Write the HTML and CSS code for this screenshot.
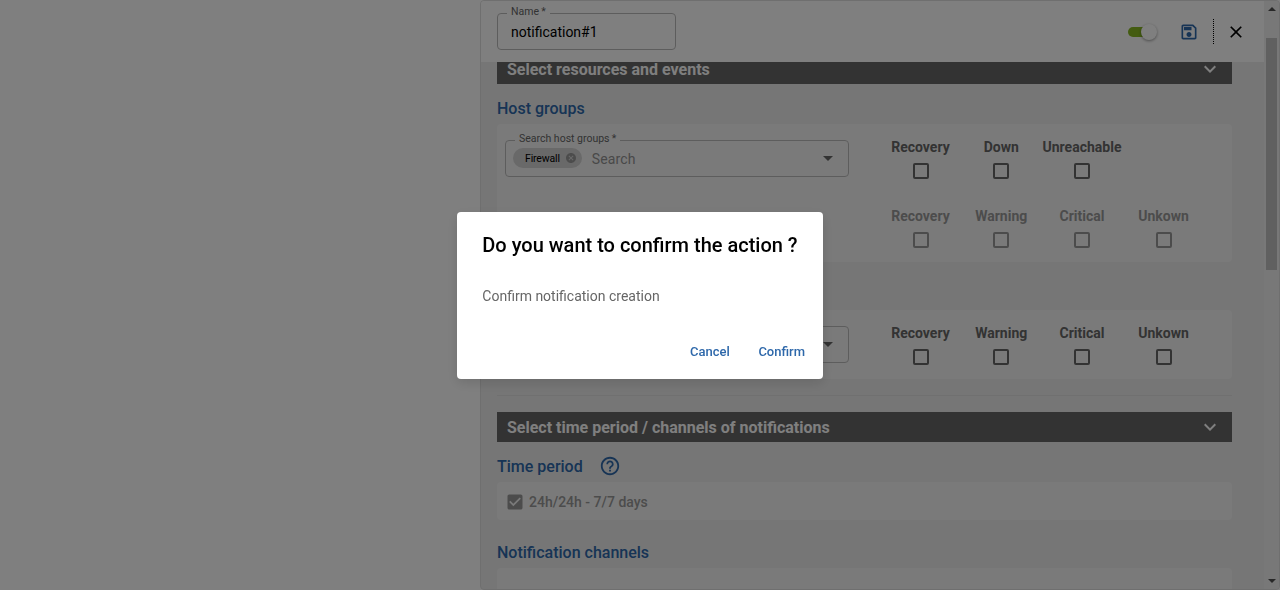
FILE: index.html
```html
<!DOCTYPE html>
<html lang="en">
<head>
<meta charset="utf-8">
<title>Notifications</title>
<link rel="stylesheet" href="styles.css">
</head>
<body>
<div class="page">
  <aside class="panel">
    <div class="main">
      <header class="header">
        <div class="field name-field"><span class="label">Name<i>&#8201;*</i></span><span class="value">notification#1</span></div>
        <div class="actions">
          <span class="switch"><span class="thumb"></span></span>
          <svg class="save" viewBox="0 0 24 24"><path fill-rule="evenodd" d="M17 3H5c-1.100 0-2 .9-2 2v14c0 1.100.9 2 2 2h14c1.100 0 2-.9 2-2V7l-4-4zm2 16H5V5h11.170L19 7.830V19zm-7-7c-1.660 0-3 1.340-3 3s1.340 3 3 3 3-1.340 3-3-1.340-3-3-3zM6 6h9v4H6z"/></svg>
          <span class="separator"></span>
          <svg class="close" viewBox="0 0 24 24"><path d="M19 6.410 17.590 5 12 10.590 6.410 5 5 6.410 10.590 12 5 17.590 6.410 19 12 13.410 17.590 19 19 17.590 13.410 12z"/></svg>
        </div>
      </header>
      <div class="scroll">
        <div class="content">
          <div class="bar"><span>Select resources and events</span><svg class="chevron" viewBox="0 0 24 24"><path d="M7.410 8.590 12 13.170l4.590-4.580L18 10l-6 6-6-6z"/></svg></div>
          <h3 class="title">Host groups</h3>
          <section class="card hosts">
            <div class="row">
              <div class="field search"><span class="label">Search host groups<i>&#8201;*</i></span><span class="chip">Firewall<svg viewBox="0 0 24 24"><path d="M12 2C6.470 2 2 6.470 2 12s4.470 10 10 10 10-4.470 10-10S17.530 2 12 2zm5 13.590L15.590 17 12 13.410 8.410 17 7 15.590 10.590 12 7 8.410 8.410 7 12 10.590 15.590 7 17 8.410 13.410 12 17 15.590z"/></svg></span><span class="hint">Search</span><svg class="arrow" viewBox="0 0 24 24"><path d="m7 10 5 5 5-5z"/></svg></div>
              <div class="checks">
                <div class="check">Recovery<span class="box"></span></div>
                <div class="check">Down<span class="box"></span></div>
                <div class="check">Unreachable<span class="box"></span></div>
              </div>
            </div>
            <div class="row second">
              <div class="checks disabled">
                <div class="check">Recovery<span class="box"></span></div>
                <div class="check">Warning<span class="box"></span></div>
                <div class="check">Critical<span class="box"></span></div>
                <div class="check">Unkown<span class="box"></span></div>
              </div>
            </div>
          </section>
          <section class="card services">
            <div class="row">
              <div class="field search"><svg class="arrow" viewBox="0 0 24 24"><path d="m7 10 5 5 5-5z"/></svg></div>
              <div class="checks">
                <div class="check">Recovery<span class="box"></span></div>
                <div class="check">Warning<span class="box"></span></div>
                <div class="check">Critical<span class="box"></span></div>
                <div class="check">Unkown<span class="box"></span></div>
              </div>
            </div>
          </section>
          <hr class="divider">
          <div class="bar"><span>Select time period / channels of notifications</span><svg class="chevron" viewBox="0 0 24 24"><path d="M7.410 8.590 12 13.170l4.590-4.580L18 10l-6 6-6-6z"/></svg></div>
          <h3 class="title">Time period <svg class="help" viewBox="0 0 24 24"><path d="M11 18h2v-2h-2v2zm1-16C6.480 2 2 6.480 2 12s4.480 10 10 10 10-4.480 10-10S17.520 2 12 2zm0 18c-4.410 0-8-3.590-8-8s3.590-8 8-8 8 3.590 8 8-3.590 8-8 8zm0-14c-2.210 0-4 1.790-4 4h2c0-1.100.9-2 2-2s2 .9 2 2c0 2-3 1.750-3 5h2c0-2.250 3-2.500 3-5 0-2.210-1.790-4-4-4z"/></svg></h3>
          <section class="card period"><svg class="checked" viewBox="0 0 24 24"><path d="M19 3H5c-1.110 0-2 .9-2 2v14c0 1.100.89 2 2 2h14c1.110 0 2-.9 2-2V5c0-1.100-.89-2-2-2zm-9 14l-5-5 1.410-1.410L10 14.170l7.590-7.590L19 8l-9 9z"/></svg><span>24h/24h - 7/7 days</span></section>
          <h3 class="title channels-title">Notification channels</h3>
          <section class="card channels"></section>
        </div>
      </div>
    </div>
    <div class="scrollbar"><span class="up"></span><span class="handle"></span><span class="down"></span></div>
  </aside>
</div>
<div class="backdrop">
  <div class="dialog">
    <h2>Do you want to confirm the action ?</h2>
    <p>Confirm notification creation</p>
    <div class="buttons"><span>Cancel</span><span>Confirm</span></div>
  </div>
</div>
</body>
</html>
```
FILE: styles.css
```css
* { box-sizing: border-box; }
body { margin: 0; font-family: Roboto, sans-serif; background: #fff; overflow: hidden; }
svg { display: block; fill: currentColor; flex: none; }
.page { height: 590px; display: flex; justify-content: flex-end; }
.panel { width: 800px; height: 590px; display: flex; border: 1px solid #dedede; border-radius: 4px; overflow: hidden; background: #ededed; }
.main { flex: 1; display: flex; flex-direction: column; min-width: 0; }
.header { height: 61px; flex: none; background: #fff; display: flex; justify-content: space-between; align-items: center; padding: 0 15px 0 16px; }
.field { position: relative; border: 1px solid #bbb; border-radius: 4px; height: 37px; display: flex; align-items: center; }
.label { position: absolute; top: -10px; left: 9px; padding: 0 4px; line-height: 16px; font-size: 10.5px; color: #666; background: #fff; white-space: nowrap; }
.label i { font-style: normal; }
.name-field { width: 179px; padding-left: 13px; }
.value { font-size: 14px; line-height: 24px; color: #000; }
.actions { display: flex; align-items: center; }
.switch { position: relative; width: 28px; height: 10px; border-radius: 5px; background: #88b922; margin-right: 25px; }
.thumb { position: absolute; right: -1px; top: -3px; width: 16px; height: 16px; border-radius: 50%; background: #fff; box-shadow: 0 1px 3px rgba(0,0,0,.4); }
.save { width: 20px; height: 20px; margin-left: -2px; color: #2e68aa; }
.separator { height: 25px; border-left: 1px dotted #000; margin: 0 12px 0 14px; }
.close { width: 20px; height: 20px; margin-right: 3px; color: #000; }
.scroll { flex: 1; min-height: 0; overflow: hidden; }
.content { margin: -8px 32px 0 16px; }
.bar { height: 30px; display: flex; align-items: center; justify-content: space-between; padding: 0 10px; background: #666; color: #fff; font-weight: 700; font-size: 16px; }
.chevron { width: 24px; height: 24px; }
.title { margin: 0; height: 40px; padding-top: 9px; display: flex; align-items: center; font-size: 16px; line-height: 30px; font-weight: 500; color: #2e68aa; }
.help { width: 22px; height: 22px; margin: -1px 0 0 16px; }
.card { background: #f5f5f5; border-radius: 4px; }
.card .label { background: #f5f5f5; }
.hosts { height: 138px; padding: 16px 8px; }
.row { display: flex; }
.second { justify-content: flex-end; margin-top: 30px; padding-right: 19.5px; }
.search { width: 344px; padding-left: 7px; }
.chip { display: flex; align-items: center; height: 20px; padding: 0 5px 0 12px; gap: 5px; border-radius: 10px; background: #d2d2d2; color: #000; font-size: 10.5px; letter-spacing: -.16px; margin-top: -1px; }
.chip svg { width: 12px; height: 12px; color: #999; }
.hint { margin-left: 10px; font-size: 14px; letter-spacing: .13px; color: #929292; }
.arrow { width: 24px; height: 24px; margin: -1px 8px 0 auto; color: #666; }
.checks { display: grid; grid-template-columns: 81px 80.500px 81px 82px; margin: -1px 0 0 31px; color: #666; }
.check { display: flex; flex-direction: column; align-items: center; font-size: 14px; line-height: 16px; font-weight: 700; white-space: nowrap; }
.box { width: 16px; height: 16px; margin-top: 8px; border: 2px solid #666; border-radius: 2px; }
.disabled { color: #999; }
.disabled .box { border-color: #999; }
.services { height: 69px; margin-top: 48px; padding: 16px 8px; }
.divider { height: 1px; border: 0; margin: 16px 0; background: #e1e1e1; }
.period { height: 38px; padding: 1px 0 0 8px; display: flex; align-items: center; gap: 4px; color: #999; font-size: 14px; font-weight: 500; }
.checked { width: 20px; height: 20px; }
.title.channels-title { height: 48px; padding-top: 17px; }
.channels { height: 40px; }
.scrollbar { width: 15px; background: #f1f1f1; display: flex; flex-direction: column; align-items: center; }
.up, .down { width: 0; height: 0; border: solid transparent; border-width: 4px; }
.up { border-bottom-color: #505050; border-top: 0; margin-top: 6px; }
.handle { width: 11px; height: 232px; margin-top: 27px; background: #c1c1c1; }
.down { border-top-color: #505050; border-bottom: 0; margin-top: auto; margin-bottom: 6px; }
.backdrop { position: fixed; inset: 0; background: rgba(0,0,0,.5); display: flex; align-items: center; justify-content: center; }
.dialog { width: 366px; height: 167px; margin-top: 1px; background: #fff; border-radius: 4px; padding: 17px 18px 0 25.300px; box-shadow: 0 4px 12px rgba(0,0,0,.12); }
.dialog h2 { margin: 0; font-size: 20px; line-height: 32px; font-weight: 500; color: #000; white-space: nowrap; }
.dialog p { margin: 25px 0 0; font-size: 14px; line-height: 20px; color: #666; }
.buttons { display: flex; justify-content: flex-end; gap: 28.500px; margin-top: 36px; font-size: 13px; line-height: 20px; font-weight: 500; color: #2e68aa; }
```
